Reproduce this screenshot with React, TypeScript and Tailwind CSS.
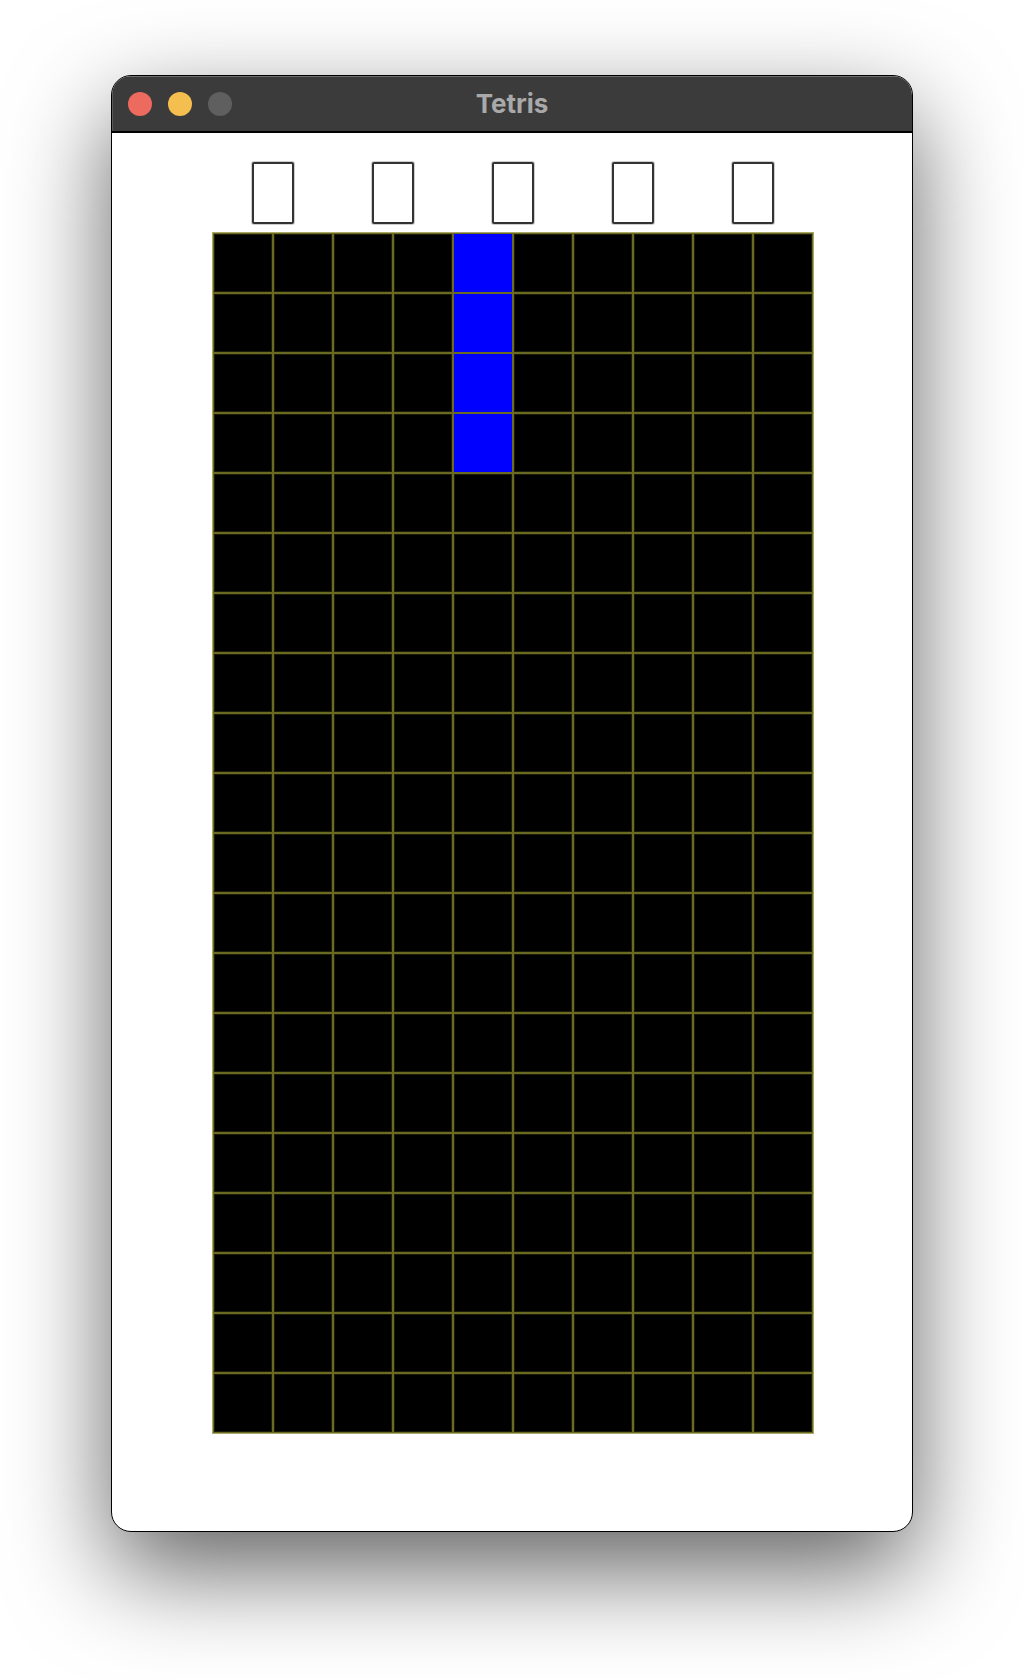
import React from 'react';

const cells = Array.from({ length: 200 }, (_, i) => i);
// the I piece sits in column 4, top four rows
const blue = [4, 14, 24, 34];
const previews = [0, 1, 2, 3, 4];

export default function App() {
    return (
        <div className="h-[1680px] w-[1024px] overflow-hidden bg-white pl-[111px] pt-[75px]">
            <div className="h-[1457px] w-[802px] overflow-hidden rounded-[20px] border border-black bg-white shadow-[0_38px_100px_rgba(0,0,0,0.62)]">
                <div className="relative flex h-[57px] items-center gap-4 border-b-2 border-black bg-[#3b3b3b] pl-4 shadow-[inset_0_1px_0_#6e6e6e,inset_1px_0_0_#5a5a5a]">
                    <div className="h-6 w-6 rounded-full bg-[#ed6a5e]" />
                    <div className="h-6 w-6 rounded-full bg-[#f4bf4f]" />
                    <div className="h-6 w-6 rounded-full bg-[#5f5f5f]" />
                    <div className="absolute inset-x-0 top-0 flex h-full items-center justify-center text-[26px] font-bold text-[#a9a9a9] [font-family:Inter,sans-serif]">
                        Tetris
                    </div>
                </div>
                <div className="ml-[140px] mt-[29px] flex gap-[78px]">
                    {previews.map((p) => (
                        <div key={p} className="h-[62px] w-[42px] rounded-[2px] border-2 border-[#333333] bg-white shadow-[0_0_0_1px_rgba(58,58,58,0.25)]" />
                    ))}
                </div>
                <div className="ml-[100px] mt-2 grid w-[602px] grid-cols-[repeat(10,58px)] gap-[2px] border border-[#a9a96a] bg-[#6a6a22] p-[1px]">
                    {cells.map((c) => (
                        <div key={c} className={blue.includes(c) ? 'h-[58px] bg-[#0000ff]' : 'h-[58px] bg-black shadow-[inset_0_0_0_1px_#1c1c08]'} />
                    ))}
                </div>
            </div>
        </div>
    );
}
